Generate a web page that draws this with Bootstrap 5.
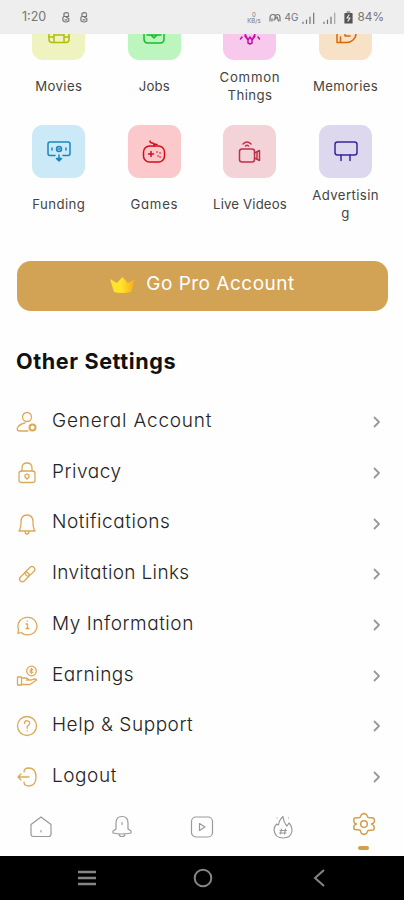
<!DOCTYPE html>
<html lang="en">
<head>
<meta charset="utf-8">
<meta name="viewport" content="width=device-width, initial-scale=1">
<title>Settings</title>
<link href="https://cdn.jsdelivr.net/npm/bootstrap@5.3.0/dist/css/bootstrap.min.css" rel="stylesheet">
<style>
body{font-family:Inter,"Noto Sans",sans-serif;font-feature-settings:"cv11","ss03";background:#fefefe;color:#222}
svg{display:block;fill:none;stroke:currentColor;stroke-width:1.5;stroke-linecap:round;stroke-linejoin:round;flex:none}
.phone{width:404px;height:900px}
.status{height:34px;background:#eee;color:#757575;font-size:12.5px;z-index:2;padding:1px 20px 0 22px}
.status svg{stroke-width:1.2}
.status .pct{font-size:11.8px}
.status .net{font-size:10px}
.tiles{margin-top:-27px;padding:0 10px 0 11px;height:236px}
.tile-cell{width:95.6px;height:118px}
.tile{width:53px;height:53px;border-radius:11px}
.tile-name{height:52px;line-height:18.5px;font-size:13.2px;color:#444;letter-spacing:.4px;white-space:nowrap}
.wide{letter-spacing:.75px}
.snug{letter-spacing:.15px}
.movies{background:#eef3bf;color:#b3bd10}
.jobs{background:#bdf5bf;color:#14bd2c}
.common{background:#f7c9ec;color:#c30fa5}
.memories{background:#f7e2c8;color:#d4690c}
.funding{background:#cbe9f7;color:#1688bd}
.games{background:#fbc9cc;color:#d50c18}
.live{background:#f4d3d8;color:#bd3249}
.ads{background:#ded8ef;color:#3c229e}
.pro{height:50px;margin:18px 16px 0 17px;border-radius:14px;background:#d2a355;color:#fff;font-size:19px;letter-spacing:.5px;padding-bottom:4px;gap:11px;border:0}
.heading{margin:36px 0 0 16px;font-size:21.6px;line-height:29px;font-weight:650;letter-spacing:.6px;color:#111}
.menu{margin-top:21px;height:404px}
.menu-row{height:50.7px;padding:0 21px 0 16px}
.menu-row>svg:first-child{color:#dba958;stroke-width:1.3;margin-right:14px}
.menu-row>span{font-size:19px;font-weight:350;margin-top:-2px;color:#242424;letter-spacing:.55px}
.menu-row>.roomy{letter-spacing:.8px}
.menu-row>.close{letter-spacing:.35px}
.chev{color:#999;stroke-width:1.8}
.tabs{height:55px;color:#999;padding-left:.5px}
.tabs>div{width:81px;padding-top:14px}
.tabs svg{stroke-width:1.2}
.tabs>.tab-on{color:#d2a04c;padding-top:8px}
.tab-on svg{stroke-width:1.5}
.dash{width:11px;height:4px;border-radius:2px;background:#d2a04c;margin-top:7px}
.sys{height:44px;background:#000;color:#858585;padding-left:1px}
.sys>div{width:116px}
.sys svg{stroke-width:2;stroke-linecap:butt;stroke-linejoin:miter}
.sys .bars{stroke-width:2.5}
.kb{font-size:6px;line-height:6px}
</style>
</head>
<body>
<div class="phone d-flex flex-column overflow-hidden">
<header class="status position-relative d-flex align-items-center flex-shrink-0">
  <span>1:20</span>
  <svg class="ms-3" width="8" height="11" viewBox="0 0 8 11"><path d="M6.500 1.200Q4 0 2 1.500v3h4.500v-2M1.200 5Q.5 7 1.200 9q2.800 2 5.600 0V6.500L4 5M3 7.800h2"/></svg>
  <svg class="ms-2" width="12" height="11" viewBox="-2 0 12 11"><path d="M6.500 1.200Q4 0 2 1.500v3h4.500v-2M1.200 5Q.5 7 1.200 9q2.800 2 5.600 0V6.500L4 5M3 7.800h2"/></svg>
  <div class="ms-auto d-flex align-items-center">
    <div class="kb text-center me-2"><div>0</div><div>KB/s</div></div>
    <svg width="12" height="10" viewBox="0 0 12 10"><path d="M1 8V5q0-3.500 3-3.500T6 5M3 8V5.500M6 5q0-3.500 2.500-3.500T11 5v3M5 7l3-3 1.500 4"/></svg>
    <span class="net ms-1 me-1">4G</span>
    <svg width="13" height="12" viewBox="0 0 13 12"><path d="M1 11.500v-1.500M4.500 11.500V8M8 11.500V5M11.700 11.500V1"/></svg>
    <svg class="ms-2" width="13" height="12" viewBox="0 0 13 12"><path d="M1 11.500v-1.500M4.500 11.500V8M8 11.500V5"/><path d="M11.700 11.500V1" opacity=".6"/></svg>
    <svg class="ms-2 me-1" width="9" height="13" viewBox="0 0 9 13"><path d="M1 2.500h7V12H1zM3.200 1h2.600" fill="#555" stroke="#555"/><path d="M5 4L3 7h3l-2 3" stroke="#eee"/></svg>
    <span class="pct">84%</span>
  </div>
</header>

<section class="tiles d-flex flex-wrap flex-shrink-0">
  <div class="tile-cell d-flex flex-column align-items-center">
    <div class="tile movies d-flex align-items-center justify-content-center"><svg width="24" height="24" viewBox="0 0 24 24"><rect x="2" y="3" width="20" height="17.500" rx="3"/><path d="M7 3v17M17 3v17M2 15h5M17 15h5M7 13h10M2 9h5M17 9h5"/></svg></div>
    <div class="tile-name d-flex align-items-center text-center">Movies</div>
  </div>
  <div class="tile-cell d-flex flex-column align-items-center">
    <div class="tile jobs d-flex align-items-center justify-content-center"><svg width="24" height="24" viewBox="0 0 24 24"><path d="M2 13v4q0 4 4 4h12q4 0 4-4v-4M2 13V8q0-3 3-3h14q3 0 3 3v5M5 13h14M9 13l3 3 3-3"/></svg></div>
    <div class="tile-name snug d-flex align-items-center text-center">Jobs</div>
  </div>
  <div class="tile-cell d-flex flex-column align-items-center">
    <div class="tile common d-flex align-items-center justify-content-center"><svg width="24" height="24" viewBox="0 0 24 24"><path d="M7 12Q5 2 12 2t5 10l-3 6v3l-2 1-2-1v-3zM7 14l3 4 2-3 2 3 3-4M4 15l-1.500 2M20 15l1.500 2"/></svg></div>
    <div class="tile-name d-flex align-items-center text-center"><span><span class="wide">Common</span><br>Things</span></div>
  </div>
  <div class="tile-cell d-flex flex-column align-items-center">
    <div class="tile memories d-flex align-items-center justify-content-center"><svg width="24" height="24" viewBox="0 0 24 24"><path d="M3 12v8.500h9A9.500 9.200 0 1 0 3 12M6.500 20v-5M11 8v6h5"/></svg></div>
    <div class="tile-name d-flex align-items-center text-center">Memories</div>
  </div>
  <div class="tile-cell d-flex flex-column align-items-center">
    <div class="tile funding d-flex align-items-center justify-content-center"><svg width="24" height="24" viewBox="0 0 24 24"><path d="M8 15.500H3q-2 0-2-2V4q0-2 2-2h18q2 0 2 2v9.500q0 2-2 2h-5M12 15v6M9.500 18.500l2.500 2.500 2.500-2.500zM5 8v2M19 8v2"/><circle cx="12" cy="9" r="2.500"/><path d="M11 9h2"/></svg></div>
    <div class="tile-name d-flex align-items-center text-center">Funding</div>
  </div>
  <div class="tile-cell d-flex flex-column align-items-center">
    <div class="tile games d-flex align-items-center justify-content-center"><svg width="24" height="24" viewBox="0 0 24 24"><rect x="1.500" y="6" width="21" height="16" rx="6"/><path d="M12 6V4.500Q12 3 10 3T8 1M12 4l3 .5M9 11.500v5M6.500 14h5"/><path d="M15 12h.1M18 13h.1M16 16h.1M18 17h.1"/></svg></div>
    <div class="tile-name wide d-flex align-items-center text-center">Games</div>
  </div>
  <div class="tile-cell d-flex flex-column align-items-center">
    <div class="tile live d-flex align-items-center justify-content-center"><svg width="24" height="24" viewBox="0 0 24 24"><rect x="1.500" y="9" width="15" height="13" rx="2.500"/><path d="M16.500 13l5-2.500v10l-5-2.500M5 4q4-4 8 0M7.500 6Q9 4.500 10.500 6"/><path d="M19 12.500v6"/></svg></div>
    <div class="tile-name snug d-flex align-items-center text-center">Live Videos</div>
  </div>
  <div class="tile-cell d-flex flex-column align-items-center">
    <div class="tile ads d-flex align-items-center justify-content-center"><svg width="24" height="24" viewBox="0 0 24 24"><rect x="1" y="2" width="22" height="13" rx="2.500"/><path d="M7 15v5.500M16 15v5.500"/></svg></div>
    <div class="tile-name d-flex align-items-center text-center">Advertisin<br>g</div>
  </div>
</section>

<button class="pro d-flex align-items-center justify-content-center flex-shrink-0">
  <svg width="25" height="16" viewBox="0 0 25 16"><defs><linearGradient id="gold"><stop offset="0" stop-color="#ffe32c"/><stop offset=".45" stop-color="#ffe32c"/><stop offset="1" stop-color="#fba719"/></linearGradient></defs><path stroke="none" fill="url(#gold)" d="M0 2l7 4 5.500-6L18 6l7-4-4 13q-8.500 2-17 0z"/></svg>
  <span>Go Pro Account</span>
</button>

<h2 class="heading flex-shrink-0">Other Settings</h2>

<nav class="menu flex-shrink-0">
  <div class="menu-row d-flex align-items-center"><svg width="22" height="22" viewBox="0 0 22 22"><circle cx="11" cy="6" r="4.500"/><path d="M12 20H3q-3-1-1-4 2-3 7-4"/><circle cx="16.500" cy="16.500" r="3" stroke-width="2"/></svg><span class="roomy">General Account</span><svg class="chev ms-auto" width="12" height="12" viewBox="0 0 12 12"><path d="M3.500 1.500L8 6l-4.500 4.500"/></svg></div>
  <div class="menu-row d-flex align-items-center"><svg width="22" height="22" viewBox="0 0 22 22"><rect x="3" y="9" width="16" height="11.500" rx="2.500"/><path d="M6 9V6q0-5 5-5t5 5v3M9 13l2-1 2 1v2l-2 2-2-2z"/></svg><span>Privacy</span><svg class="chev ms-auto" width="12" height="12" viewBox="0 0 12 12"><path d="M3.500 1.500L8 6l-4.500 4.500"/></svg></div>
  <div class="menu-row d-flex align-items-center"><svg width="22" height="22" viewBox="0 0 22 22"><path d="M3 18q2-3 2-9 0-7 6-7t6 7q0 6 2 9zM9 18q0 3 2 3t2-3"/></svg><span>Notifications</span><svg class="chev ms-auto" width="12" height="12" viewBox="0 0 12 12"><path d="M3.500 1.500L8 6l-4.500 4.500"/></svg></div>
  <div class="menu-row d-flex align-items-center"><svg width="22" height="22" viewBox="0 0 22 22"><g transform="rotate(-45 11 11)"><rect x="1.500" y="8.500" width="11" height="5.500" rx="2.500"/><rect x="9.500" y="8.500" width="11" height="5.500" rx="2.500"/></g></svg><span class="close">Invitation Links</span><svg class="chev ms-auto" width="12" height="12" viewBox="0 0 12 12"><path d="M3.500 1.500L8 6l-4.500 4.500"/></svg></div>
  <div class="menu-row d-flex align-items-center"><svg width="22" height="22" viewBox="0 0 22 22"><path d="M5 18.500A9.500 8.700 0 1 0 2.500 15L2 19.500zM10 10h1.500v4.500M10 14.500h3M11.300 7v.2"/></svg><span>My Information</span><svg class="chev ms-auto" width="12" height="12" viewBox="0 0 12 12"><path d="M3.500 1.500L8 6l-4.500 4.500"/></svg></div>
  <div class="menu-row d-flex align-items-center"><svg width="22" height="22" viewBox="0 0 22 22"><circle cx="15.500" cy="6" r="4.800"/><path d="M15.500 3.500v5M14 7l3 .3M14.200 5l2.500-.5M1.500 12h4v8h-4zM5.500 13h5l3 2h-3M5.500 19.500H14l6.500-4.500q-1-2-5 0H11"/></svg><span>Earnings</span><svg class="chev ms-auto" width="12" height="12" viewBox="0 0 12 12"><path d="M3.500 1.500L8 6l-4.500 4.500"/></svg></div>
  <div class="menu-row d-flex align-items-center"><svg width="22" height="22" viewBox="0 0 22 22"><circle cx="11" cy="11" r="9.500"/><path d="M8.500 8.500q0-3 2.800-2.700 2.900.5 2.200 3-.5 1.500-2.300 2.500v2M11.200 15.800v.2"/></svg><span>Help &amp; Support</span><svg class="chev ms-auto" width="12" height="12" viewBox="0 0 12 12"><path d="M3.500 1.500L8 6l-4.500 4.500"/></svg></div>
  <div class="menu-row d-flex align-items-center"><svg width="22" height="22" viewBox="0 0 22 22"><path d="M8 6q0-4 4.500-4 7.500 0 7.500 9t-7.500 9Q8 20 8 16M2 11h11M5 8l-3 3 3 3"/></svg><span>Logout</span><svg class="chev ms-auto" width="12" height="12" viewBox="0 0 12 12"><path d="M3.500 1.500L8 6l-4.500 4.500"/></svg></div>
</nav>

<nav class="tabs d-flex flex-shrink-0">
  <div class="d-flex flex-column align-items-center"><svg width="24" height="24" viewBox="0 0 24 24"><path d="M2 9.500L12 2l10 7.500V19q0 2.500-2.500 2.500h-15Q2 21.500 2 19zM12 15.500v1.500"/></svg></div>
  <div class="d-flex flex-column align-items-center"><svg width="24" height="24" viewBox="0 0 24 24"><path d="M6 14V8q0-6.500 6-6.500T18 8v6l3 2v2q-9 2-18 0v-2zM9 19q0 2.500 3 2.500t3-2.500M12 7.500v2"/></svg></div>
  <div class="d-flex flex-column align-items-center"><svg width="24" height="24" viewBox="0 0 24 24"><rect x="1.500" y="2" width="21" height="20" rx="4.500"/><path d="M9.500 8.500v7l5.500-3.500z"/></svg></div>
  <div class="d-flex flex-column align-items-center"><svg width="24" height="24" viewBox="0 0 24 24"><path d="M12 1.500Q8 5 7.500 10L5.500 9Q3 12 3 15q1 8 9 8t9-7q0-5-3-8l-2 3q-3-3-4-9.500zM10.500 14l-1 5M14.500 14l-1 5M9 15.500h6.500M8.500 18H15M6 3h.1M17.500 3h.1"/></svg></div>
  <div class="tab-on d-flex flex-column align-items-center"><svg width="24" height="30" viewBox="0 0 24 30"><path d="M12 4.500l2.500 1 1.500 3 5.500.5q2 3 0 5l-2 1 2 1.500q1.500 2.500 0 4.500l-5.500.5-1.500 3-2.500 1-2.500-1L8 21l-5.500-.5q-1.500-2 0-4.500l2-1-2-1q-1.500-3 0-5L8 8.500l1.500-3z"/><circle cx="12" cy="15" r="3.300"/></svg><div class="dash"></div></div>
</nav>

<footer class="sys d-flex align-items-center justify-content-center flex-shrink-0">
  <div class="d-flex justify-content-center"><svg class="bars" width="18" height="18" viewBox="0 0 18 18"><path d="M0 3h18M0 9h18M0 15h18"/></svg></div>
  <div class="d-flex justify-content-center"><svg width="20" height="20" viewBox="0 0 20 20"><circle cx="10" cy="10" r="8.300"/></svg></div>
  <div class="d-flex justify-content-center"><svg width="18" height="18" viewBox="0 0 18 18"><path d="M14 1L5 9l9 8"/></svg></div>
</footer>
</div>
<script src="https://cdn.jsdelivr.net/npm/bootstrap@5.3.0/dist/js/bootstrap.bundle.min.js"></script>
</body>
</html>
